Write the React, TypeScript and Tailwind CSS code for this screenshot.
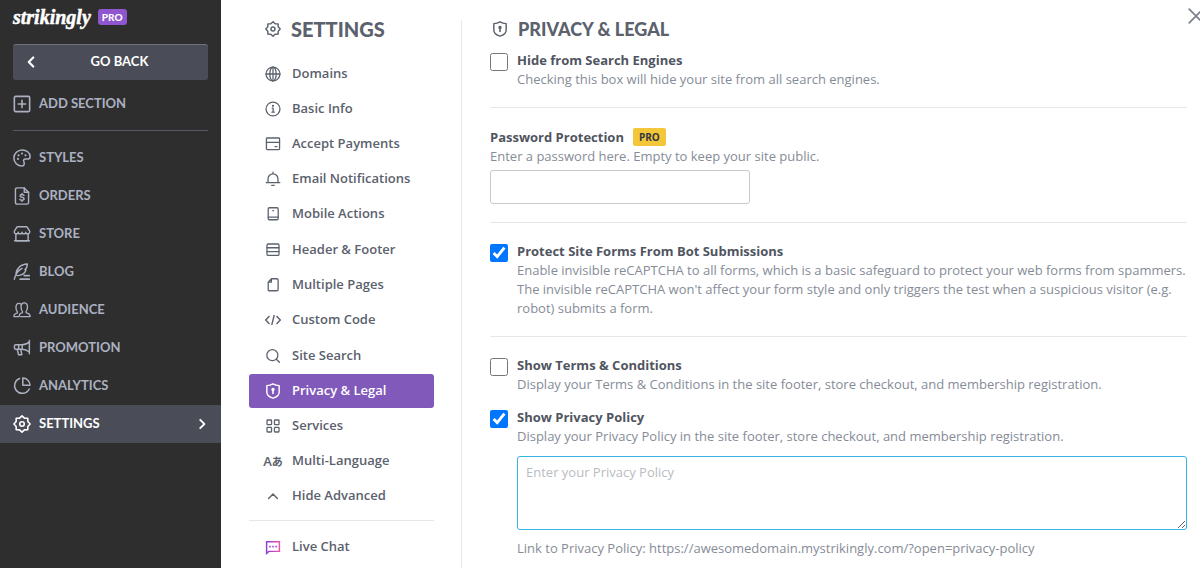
import type { ReactNode } from "react";

type IconProps = { className?: string };

function Svg({ className = "size-5", width = 1.6, children }: { className?: string; width?: number; children: ReactNode }) {
  return (
    <svg
      viewBox="0 0 20 20"
      className={`${className} shrink-0`}
      fill="none"
      stroke="currentColor"
      strokeWidth={width}
      strokeLinecap="round"
      strokeLinejoin="round"
      aria-hidden="true"
    >
      {children}
    </svg>
  );
}

/* Sidebar icons */
const AddIcon = (p: IconProps) => (
  <Svg {...p} width={1.8}>
    <rect x="1.500" y="1.500" width="17" height="17" rx="1.500" />
    <path d="M10 6v8M6 10h8" />
  </Svg>
);
const PaletteIcon = (p: IconProps) => (
  <Svg {...p} width={1.7}>
    <path d="M10 18.900C5 18.900 1 15 1 10s4.200-9 9.200-9c4.700 0 8.800 3 8.800 7.400 0 1.800-.8 2.800-2.300 2.800h-3c-1.600 0-2.200.9-1.800 2.100.5 1.500.8 2.300.5 3.800-.2 1.200-1 1.800-2.400 1.800Z" />
    <g fill="currentColor" stroke="none">
      <circle cx="5.500" cy="11" r="1.200" />
      <circle cx="6.200" cy="7" r="1.200" />
      <circle cx="10" cy="5" r="1.200" />
      <circle cx="13.900" cy="7" r="1.200" />
    </g>
  </Svg>
);
const OrderIcon = (p: IconProps) => (
  <Svg {...p} width={1.6}>
    <path d="M12.500 1H4.500A1.800 1.800 0 0 0 2.700 2.800v14.400A1.800 1.800 0 0 0 4.500 19h11a1.800 1.800 0 0 0 1.800-1.800V5.800Z" />
    <path d="M12.500 1v4.800h4.800" />
    <path d="M12.200 9.300c-.4-.6-1.200-.9-2.200-.9-1.200 0-2.100.6-2.100 1.500 0 2.200 4.400.9 4.400 3.200 0 1-.9 1.600-2.200 1.600-1.100 0-1.900-.3-2.400-1M10 7.200v1.100M10 14.800v1.100" />
  </Svg>
);
const StoreIcon = (p: IconProps) => (
  <Svg {...p} width={1.6}>
    <path d="M4.500 2h11L18.500 6.800c.3 1.800-.6 3-2.200 3-1.300 0-2.100-.8-2.100-1.800 0 1-.9 1.800-2.100 1.800S10 9 10 8c0 1-.9 1.800-2.100 1.800S5.800 9 5.800 8c0 1-.8 1.800-2.100 1.800-1.600 0-2.500-1.200-2.200-3Z" />
    <path d="M3.200 9.800v7.700h13.600V9.800" />
    <path d="M1.800 17.500h16.400" />
  </Svg>
);
const QuillIcon = (p: IconProps) => (
  <Svg {...p} width={1.6}>
    <path d="M1.500 18c1-5.500 4-9.500 8.500-12M3.500 13C3 7 8 1.500 16 1.200c-.2 3-1 5-2.700 6.200l1.200.5c-1.500 4-5.500 6.200-10 6.100" />
    <path d="M12.500 14H18M8 18h10" strokeWidth="1.900" />
  </Svg>
);
const AudienceIcon = (p: IconProps) => (
  <Svg {...p} width={1.500}>
    <path d="M8.500 17.300H19c.1-1.900-.7-3-2.500-3.600l-1.500-.5c-.7-.3-.8-1.300-.2-2 .8-1 1.300-2.500 1.300-4.400 0-3-1.200-4.800-3.600-4.800S8.900 3.800 8.900 6.800c0 1.900.5 3.400 1.300 4.400.6.700.5 1.700-.2 2l-1 .4c-1.500.6-2.300 1.800-2.200 3.700H1c-.1-1.800.5-2.700 2-3.300l1.400-.5c.7-.3.7-1.200.2-1.900C3.800 10.600 3.300 9.200 3.300 7.200c0-2.900 1.100-4.600 3.300-4.600.9 0 1.600.3 2.100.8" />
  </Svg>
);
const MegaphoneIcon = (p: IconProps) => (
  <Svg {...p} width={1.600}>
    <path d="M18.200 1.500v15M18.200 3C15.800 5.400 13 6.300 10 6.300H3A1.400 1.400 0 0 0 1.600 7.700V10A1.400 1.400 0 0 0 3 11.400h7c3 0 5.800.9 8.200 3" />
    <path d="M6.300 6.500v4.700M10.200 6.500v4.700M4.700 11.600l1.500 5.900h3.600l-1.200-5.900" />
  </Svg>
);
const PieIcon = (p: IconProps) => (
  <Svg {...p} width={1.700}>
    <path d="M7.300 1.700A8.500 8.500 0 1 0 18 13.300" />
    <path d="M10.900 1.200v8h8a8 8 0 0 0-8-8Z" />
  </Svg>
);
const GearIcon = (p: IconProps) => (
  <Svg {...p} width={1.800}>
    <path d="M10 1 12.700 3.500 16.400 3.600 16.500 7.300 19 10 16.500 12.700 16.400 16.400 12.700 16.500 10 19 7.300 16.500 3.600 16.400 3.500 12.700 1 10 3.500 7.300 3.600 3.600 7.300 3.500Z" />
    <circle cx="10" cy="10" r="2.500" />
  </Svg>
);

/* Settings menu icons */
const GlobeIcon = (p: IconProps) => (
  <Svg {...p}>
    <circle cx="10" cy="10" r="8.700" />
    <ellipse cx="10" cy="10" rx="4" ry="8.700" />
    <path d="M1.300 10h17.400M10 1.300v17.400" />
  </Svg>
);
const InfoIcon = (p: IconProps) => (
  <Svg {...p}>
    <circle cx="10" cy="10" r="8.700" />
    <path d="M9 9h1.200v5M8.600 14h3" />
    <circle cx="10" cy="6" r=".6" fill="currentColor" />
  </Svg>
);
const CardIcon = (p: IconProps) => (
  <Svg {...p}>
    <rect x="1.800" y="2.500" width="16.400" height="14.500" rx="1" />
    <path d="M1.800 8h16.400M12.500 13.200H15" />
  </Svg>
);
const BellIcon = (p: IconProps) => (
  <Svg {...p}>
    <path d="M1.500 14.500h17M3.800 14.500V9.700a6.200 6.200 0 0 1 12.400 0v4.800M10 3.300V1.500M8.500 18h3" />
  </Svg>
);
const MobileIcon = (p: IconProps) => (
  <Svg {...p}>
    <rect x="4" y="2.200" width="12.500" height="15" rx="1.500" />
    <path d="M4 14h12.500M9.800 5.800h.8" />
  </Svg>
);
const RowsIcon = (p: IconProps) => (
  <Svg {...p}>
    <rect x="2.500" y="2.500" width="15" height="14.200" rx="1.500" />
    <path d="M2.500 7.200h15M2.500 12h15" />
  </Svg>
);
const PageIcon = (p: IconProps) => (
  <Svg {...p}>
    <path d="M8 2.200h7a1.400 1.400 0 0 1 1.400 1.400v12.200a1.400 1.400 0 0 1-1.400 1.400H5.400A1.400 1.400 0 0 1 4 15.800V6.500ZM8 2.200v4.300H4" />
  </Svg>
);
const CodeIcon = (p: IconProps) => (
  <Svg {...p} width={1.800}>
    <path d="M5 5.500.9 10 5 14.500M15 5.500l4.100 4.500-4.100 4.500M11.400 4.500l-2.800 11" />
  </Svg>
);
const SearchIcon = (p: IconProps) => (
  <Svg {...p}>
    <circle cx="9.200" cy="9" r="6.900" />
    <path d="m14.200 14 3.800 3.800" />
  </Svg>
);
const ShieldIcon = (p: IconProps) => (
  <Svg {...p} width={1.800}>
    <path d="M10 1c2.200 1.200 4.700 2 7.700 2.300V11.500c0 3.800-3.400 6.100-7.700 7.400-4.300-1.300-7.700-3.600-7.700-7.400V3.300C5.300 3 7.800 2.200 10 1Z" />
    <circle cx="10" cy="8" r="1.200" fill="currentColor" />
    <path d="M10 9v4" strokeWidth="2" />
  </Svg>
);
const GridIcon = (p: IconProps) => (
  <Svg {...p}>
    <rect x="2.500" y="2.500" width="5.700" height="5.700" rx=".8" />
    <rect x="11.800" y="2.500" width="5.700" height="5.700" rx=".8" />
    <rect x="2.500" y="11.800" width="5.700" height="5.700" rx=".8" />
    <rect x="11.800" y="11.800" width="5.700" height="5.700" rx=".8" />
  </Svg>
);
const LanguageIcon = (_: IconProps) => (
  <span aria-hidden="true" className="flex items-center justify-center text-[13px] leading-4 whitespace-nowrap">
    A<span className="font-['Noto_Sans_CJK_JP',sans-serif] text-[11px] font-bold">あ</span>
  </span>
);
const ChevronUpIcon = (p: IconProps) => (
  <Svg {...p} width={1.800}>
    <path d="m4.500 13 5.500-5.500 5.500 5.500" />
  </Svg>
);
const ChatIcon = ({ className = "size-4" }: IconProps) => (
  <svg viewBox="0 0 20 20" className={`${className} shrink-0`} fill="none" strokeWidth="1.800" aria-hidden="true">
    <defs>
      <linearGradient id="chat" x1="0" y1="0" x2="1" y2="0">
        <stop offset="0" stopColor="#8b3fd6" />
        <stop offset="1" stopColor="#f04fb0" />
      </linearGradient>
    </defs>
    <path d="M2 3.500h16v12H4.800L2 18Z" stroke="url(#chat)" />
    <g fill="#a044cf">
      <rect x="5.200" y="8.500" width="2" height="2" />
      <rect x="9" y="8.500" width="2" height="2" />
      <rect x="12.800" y="8.500" width="2" height="2" />
    </g>
  </svg>
);

type Item = { label: string; Icon: (p: IconProps) => ReactNode; active?: boolean };

const sidebarItems: Item[] = [
  { label: "STYLES", Icon: PaletteIcon },
  { label: "ORDERS", Icon: OrderIcon },
  { label: "STORE", Icon: StoreIcon },
  { label: "BLOG", Icon: QuillIcon },
  { label: "AUDIENCE", Icon: AudienceIcon },
  { label: "PROMOTION", Icon: MegaphoneIcon },
  { label: "ANALYTICS", Icon: PieIcon },
  { label: "SETTINGS", Icon: GearIcon, active: true },
];

const menuGroups: Item[][] = [
  [
    { label: "Domains", Icon: GlobeIcon },
    { label: "Basic Info", Icon: InfoIcon },
    { label: "Accept Payments", Icon: CardIcon },
    { label: "Email Notifications", Icon: BellIcon },
    { label: "Mobile Actions", Icon: MobileIcon },
  ],
  [
    { label: "Header & Footer", Icon: RowsIcon },
    { label: "Multiple Pages", Icon: PageIcon },
    { label: "Custom Code", Icon: CodeIcon },
  ],
  [
    { label: "Site Search", Icon: SearchIcon },
    { label: "Privacy & Legal", Icon: ShieldIcon, active: true },
    { label: "Services", Icon: GridIcon },
    { label: "Multi-Language", Icon: LanguageIcon },
    { label: "Hide Advanced", Icon: ChevronUpIcon },
  ],
];

function Sidebar() {
  return (
    <aside className="w-[221px] shrink-0 bg-[#2e2e2e] pt-2 font-['Lato',sans-serif] text-[13px] font-bold text-[#acb1c2]">
      <div className="flex h-[18px] items-center gap-[7px] px-[13px]">
        <span className="font-['Liberation_Serif',serif] text-xl leading-none font-bold text-white italic [-webkit-text-stroke:0.5px_white]">
          strikingly
        </span>
        <span className="flex h-4 items-center rounded-[3px] bg-[#8f56d0] px-1 text-[10px] font-black text-white">PRO</span>
      </div>
      <div className="px-[13px]">
        <button
          type="button"
          className="mt-[18px] flex h-9 w-full items-center rounded-[3px] border-y border-t-[#6c707b] border-b-[#4a4d57] bg-[#4a4d57] px-[9px] text-white"
        >
          <Svg className="size-[18px]" width={2.400}>
            <path d="M12.500 5 7.500 10l5 5" />
          </Svg>
          <span className="flex-1 text-center">GO BACK</span>
        </button>
        <a href="#add" className="mt-[5px] flex h-[38px] items-center gap-2">
          <AddIcon className="size-[18px]" />
          ADD SECTION
        </a>
        <hr className="mt-[7px] border-[#565a66]" />
      </div>
      <nav className="mt-2">
        {sidebarItems.map(({ label, Icon, active }) => (
          <a
            key={label}
            href={`#${label.toLowerCase()}`}
            className={`flex h-[38px] items-center gap-2 px-[13px] ${active ? "bg-[#4a4d57] text-white" : ""}`}
          >
            <Icon className="size-[18px]" />
            <span className="flex-1">{label}</span>
            {active && (
              <Svg className="size-3" width={3}>
                <path d="m7 3 7 7-7 7" />
              </Svg>
            )}
          </a>
        ))}
      </nav>
    </aside>
  );
}

function MenuLink({ label, Icon, active }: Item) {
  return (
    <a
      href={`#${label.toLowerCase().replace(/\W+/g, "-")}`}
      className={`flex h-[34px] items-center gap-[11px] rounded-[3px] px-4 ${active ? "bg-[#8159bb] text-white" : ""}`}
    >
      <span className="flex w-4 justify-center">
        <Icon className="size-4" />
      </span>
      {label}
    </a>
  );
}

function SettingsMenu() {
  return (
    <div className="w-[185px] shrink-0 pt-[19px] text-[13px] font-semibold">
      <h1 className="flex h-5 items-center gap-2.5 px-4 font-['Lato',sans-serif] text-xl font-black">
        <GearIcon className="size-4" />
        SETTINGS
      </h1>
      <nav className="mt-[18px] flex flex-col gap-0.5">
        {menuGroups.map((group) => (
          <div key={group[0].label} className="flex flex-col gap-px">
            {group.map((item) => (
              <MenuLink key={item.label} {...item} />
            ))}
          </div>
        ))}
      </nav>
      <hr className="mt-[7px] mb-[9px] border-[#e5e7ea]" />
      <MenuLink label="Live Chat" Icon={ChatIcon} />
    </div>
  );
}

function Option({ id, title, checked, children }: { id: string; title: string; checked?: boolean; children: ReactNode }) {
  return (
    <div className="flex items-start gap-[9px]">
      <input id={id} type="checkbox" defaultChecked={checked} className="mt-0.5 size-[18px] shrink-0" />
      <div className="min-w-0 flex-1">
        <label htmlFor={id} className="block font-bold text-[#50555f]">
          {title}
        </label>
        {children}
      </div>
    </div>
  );
}

export default function App() {
  return (
    <div className="flex min-h-screen overflow-hidden bg-white font-['Open_Sans',sans-serif] text-[#5b616d]">
      <Sidebar />
      <div className="relative flex min-w-0 flex-1 overflow-hidden pr-[13px] pl-7">
        <SettingsMenu />
        <div className="mt-5 mr-7 ml-[27px] w-px shrink-0 bg-[#e5e7ea]" />
        <main className="min-w-0 flex-1 pt-[19px] text-[13px] leading-[19px] text-[#868c97]">
          <h2 className="mb-3 flex h-5 items-center gap-2.5 pl-0.5 font-['Lato',sans-serif] text-lg font-black text-[#5b616d]">
            <ShieldIcon className="size-4" />
            PRIVACY &amp; LEGAL
          </h2>

          <section className="border-b border-[#e5e7ea] pb-[18px]">
            <Option id="hide" title="Hide from Search Engines">
              <p>Checking this box will hide your site from all search engines.</p>
            </Option>
          </section>

          <section className="border-b border-[#e5e7ea] pt-[19px] pb-[18px]">
            <div className="flex h-5 items-center gap-[9px]">
              <label htmlFor="password" className="font-bold text-[#50555f]">
                Password Protection
              </label>
              <span className="flex h-[18px] items-center rounded-[2px] bg-[#f4c63a] px-[6px] text-[10px] font-bold text-[#333740]">
                PRO
              </span>
            </div>
            <p>Enter a password here. Empty to keep your site public.</p>
            <input
              id="password"
              type="text"
              className="mt-1 block h-[34px] w-[260px] rounded-[3px] border border-[#c6c9cd] px-2"
            />
          </section>

          <section className="border-b border-[#e5e7ea] pt-[19px] pb-[18px]">
            <Option id="bots" title="Protect Site Forms From Bot Submissions" checked>
              <p>
                Enable invisible reCAPTCHA to all forms, which is a basic safeguard to protect your web forms from
                spammers. The invisible reCAPTCHA won't affect your form style and only triggers the test when a
                suspicious visitor (e.g. robot) submits a form.
              </p>
            </Option>
          </section>

          <section className="flex flex-col gap-3.5 pt-[19px]">
            <Option id="terms" title="Show Terms & Conditions">
              <p>Display your Terms &amp; Conditions in the site footer, store checkout, and membership registration.</p>
            </Option>
            <Option id="privacy" title="Show Privacy Policy" checked>
              <p>Display your Privacy Policy in the site footer, store checkout, and membership registration.</p>
              <textarea
                aria-label="Privacy Policy"
                placeholder="Enter your Privacy Policy"
                className="mt-2.5 block h-[74px] w-full rounded-[3px] border border-[#33b3e6] px-2 py-1.5 placeholder:text-[#b9bcc2]"
              />
              <p className="mt-[9px]">Link to Privacy Policy: https://awesomedomain.mystrikingly.com/?open=privacy-policy</p>
            </Option>
          </section>
        </main>
        <button type="button" aria-label="Close" className="absolute top-2 -right-1 text-[#7c828e]">
          <Svg className="size-4" width={2.200}>
            <path d="m1.500 1.500 17 17M18.500 1.500l-17 17" />
          </Svg>
        </button>
      </div>
    </div>
  );
}
